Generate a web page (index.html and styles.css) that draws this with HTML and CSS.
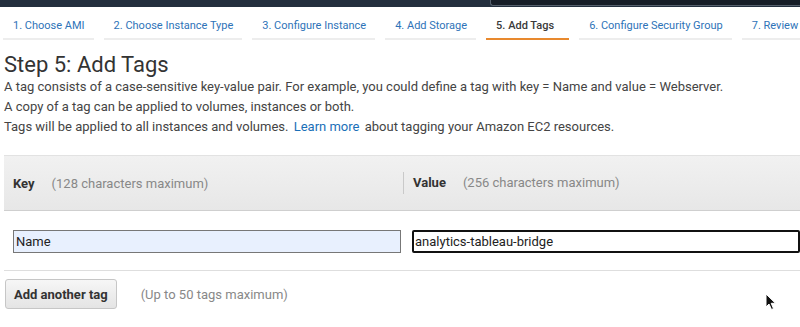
FILE: index.html
```html
<!DOCTYPE html>
<html lang="en">
<head>
    <meta charset="UTF-8">
    <meta name="viewport" content="width=device-width, initial-scale=1.0">
    <title>Step 5: Add Tags</title>
    <link rel="stylesheet" href="styles.css">
</head>
<body>
    <div class="topbar">
        <div class="search-box"></div>
    </div>

    <nav class="wizard-tabs">
        <a class="tab" href="#">1. Choose AMI</a>
        <a class="tab" href="#">2. Choose Instance Type</a>
        <a class="tab" href="#">3. Configure Instance</a>
        <a class="tab" href="#">4. Add Storage</a>
        <a class="tab active" href="#">5. Add Tags</a>
        <a class="tab" href="#">6. Configure Security Group</a>
        <a class="tab" href="#">7. Review</a>
    </nav>

    <div class="content">
        <h1>Step 5: Add Tags</h1>
        <p>A tag consists of a case-sensitive key-value pair. For example, you could define a tag with key = Name and value = Webserver.</p>
        <p>A copy of a tag can be applied to volumes, instances or both.</p>
        <p>Tags will be applied to all instances and volumes. <a class="link" href="#">Learn more</a> about tagging your Amazon EC2 resources.</p>

        <div class="tag-table">
            <div class="tag-head">
                <div class="col"><strong>Key</strong><span class="hint">(128 characters maximum)</span></div>
                <div class="col col-value"><strong>Value</strong><span class="hint">(256 characters maximum)</span></div>
            </div>
            <div class="tag-row">
                <div class="col"><input class="field autofill" type="text" value="Name"></div>
                <div class="col col-value"><input class="field focused" type="text" value="analytics-tableau-bridge"></div>
            </div>
        </div>

        <div class="actions">
            <button class="btn">Add another tag</button>
            <span class="hint">(Up to 50 tags maximum)</span>
        </div>
    </div>

    <svg class="cursor" width="12" height="18" viewBox="0 0 12 18">
        <path d="M1 1 L1 14 L4 11 L6.5 16.5 L8.5 15.6 L6.2 10.3 L10.5 10.3 Z" fill="#111" stroke="#fff" stroke-width="1"/>
    </svg>
</body>
</html>
```

FILE: styles.css
```css
body {
    margin: 0;
    font-family: Roboto, "Liberation Sans", Arial, sans-serif;
    color: #444;
    background: #fff;
    overflow: hidden;
    position: relative;
    height: 327px;
}
.topbar {
    height: 7px;
    background: #232f3e;
    display: flex;
}
.search-box {
    margin-left: 490px;
    flex: 1;
    height: 5px;
    background: #161d27;
    border: 1px solid #56606d;
    border-top: none;
    border-right: none;
    border-radius: 0 0 0 3px;
}
.wizard-tabs {
    display: flex;
    gap: 10px;
    padding-left: 3px;
    white-space: nowrap;
}
.tab {
    display: block;
    padding: 12px 9px 6px 10px;
    font-size: 11px;
    line-height: 13px;
    color: #2e73b8;
    text-decoration: none;
    border-bottom: 2px solid #ededed;
}
.tab.active {
    padding-right: 15px;
    color: #3a3a3a;
    font-weight: 500;
    border-bottom-color: #e8892e;
}
.content {
    padding: 0 0 0 4px;
}
h1 {
    margin: 13px 0 0;
    font-size: 22px;
    font-weight: 400;
    color: #333;
    line-height: 24px;
}
p {
    margin: 0;
    font-size: 13px;
    line-height: 20px;
}
.link {
    color: #1a6fb8;
    text-decoration: none;
    margin: 0 2px;
}
.tag-table {
    margin-top: 18px;
}
.tag-head,
.tag-row {
    display: grid;
    grid-template-columns: 399px 1fr;
}
.tag-head {
    height: 54px;
    align-items: center;
    background: linear-gradient(#f1f1f1, #e7e7e7);
    border-top: 1px solid #e2e2e2;
    border-bottom: 1px solid #cfcfcf;
    font-size: 13px;
}
.tag-head .col {
    padding-left: 9px;
}
.tag-head .col-value {
    border-left: 1px solid #c9c9c9;
    padding-left: 9px;
    line-height: 22px;
}
.tag-head strong {
    color: #333;
    margin-right: 17px;
}
.hint {
    color: #888;
    font-size: 13px;
}
.tag-row {
    padding: 19px 0 17px;
    border-bottom: 1px solid #dedede;
}
.tag-row .col {
    padding-left: 9px;
}
.field {
    display: block;
    box-sizing: border-box;
    width: 388px;
    height: 23px;
    padding: 0 2px;
    font-family: inherit;
    font-size: 13px;
    color: #222;
    border: 1px solid #777;
    border-radius: 0;
    outline: none;
}
.field.autofill {
    background: #e8f0fe;
}
.field.focused {
    border: 2px solid #111;
    border-radius: 2px;
    padding: 0 1px;
}
.actions {
    display: flex;
    align-items: center;
    gap: 24px;
    padding-top: 8px;
}
.btn {
    margin-left: 1px;
    height: 30px;
    padding: 0 8px;
    font-family: inherit;
    font-size: 13px;
    font-weight: 700;
    color: #333;
    background: linear-gradient(#f6f6f6, #e4e4e4);
    border: 1px solid #c6c6c6;
    border-radius: 3px;
}
.cursor {
    position: absolute;
    left: 765px;
    top: 293px;
}
```
